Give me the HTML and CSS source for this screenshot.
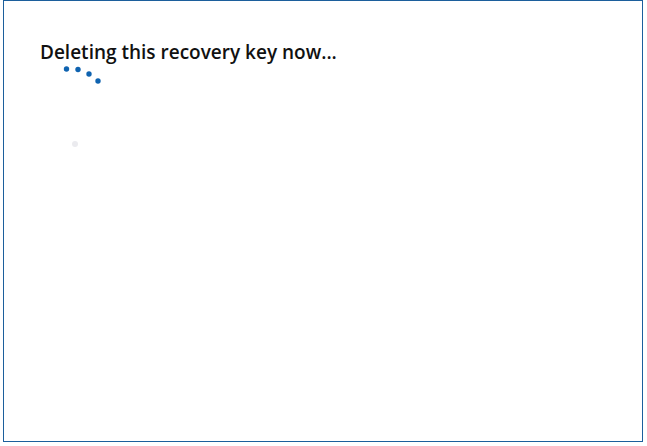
FILE: index.html
```html
<!DOCTYPE html>
<html lang="en">
<head>
<meta charset="utf-8">
<title>Deleting recovery key</title>
<link rel="stylesheet" href="styles.css">
</head>
<body>
<div class="frame">
  <h1 class="title">Deleting this recovery key now...</h1>
  <svg class="spinner" width="60" height="90" viewBox="60 60 60 90" aria-hidden="true">
    <circle cx="66.5" cy="69" r="2.7" fill="#0f63b0"/>
    <circle cx="78" cy="69.5" r="2.7" fill="#0f63b0"/>
    <circle cx="89" cy="74" r="2.7" fill="#0f63b0"/>
    <circle cx="98" cy="81" r="2.7" fill="#0f63b0"/>
    <circle cx="75" cy="144" r="3" fill="#ebebef"/>
  </svg>
</div>
</body>
</html>
```

FILE: styles.css
```css
html, body {
  margin: 0;
  padding: 0;
  background: #ffffff;
}
.frame {
  position: relative;
  box-sizing: border-box;
  margin-left: 3px;
  width: 640px;
  height: 442px;
  border: 1px solid #1c5f9c;
  background: #ffffff;
}
.title {
  margin: 0;
  padding: 39px 0 0 36px;
  font-family: "Open Sans", "Noto Sans", sans-serif;
  font-weight: 600;
  font-size: 19px;
  line-height: 24px;
  color: #111111;
}
.spinner {
  position: absolute;
  left: 56px;
  top: 59px;
}
```
